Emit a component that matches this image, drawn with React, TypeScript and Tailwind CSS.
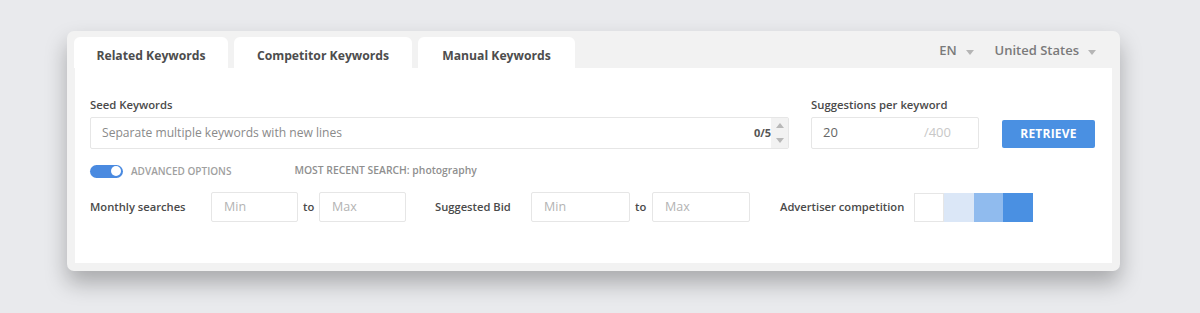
const font = { fontFamily: '"Open Sans", "Noto Sans", sans-serif' };

function Caret() {
  return (
    <svg width="8" height="5" viewBox="0 0 8 5" className="ml-[9px] mt-[2px]">
      <path d="M0 0h8L4 5z" fill="#b5b5b5" />
    </svg>
  );
}

function Tab({ label, width }: { label: string; width: string }) {
  return (
    <div
      className={`${width} h-[31px] bg-white rounded-t-[6px] flex items-center justify-center pt-[7px] text-[12.2px] font-bold text-[#4d4d4d]`}
    >
      {label}
    </div>
  );
}

function RangeInput({ w, placeholder }: { w: string; placeholder: string }) {
  return (
    <div className={`${w} h-[30px] border border-[#e6e6e6] rounded-[2px] flex items-center pl-[12px] text-[12.5px] text-[#b3b3b3]`}>
      {placeholder}
    </div>
  );
}

export default function App() {
  return (
    <div className="w-[1200px] h-[313px] bg-[#e9eaed] pt-[31px] overflow-hidden" style={font}>
      <div className="ml-[67px] w-[1053px] h-[240px] bg-[#f2f2f2] rounded-[7px] shadow-[0_12px_22px_rgba(0,0,0,0.28)] flex flex-col">
        {/* Tabs */}
        <div className="h-[37px] flex items-end pl-[7px] pr-[24px]">
          <div className="flex gap-[6px]">
            <Tab label="Related Keywords" width="w-[154px]" />
            <Tab label="Competitor Keywords" width="w-[178px]" />
            <Tab label="Manual Keywords" width="w-[157px]" />
          </div>
          <div className="ml-auto h-[31px] flex items-center text-[13px] font-semibold text-[#7a7a7a] pb-[3px]">
            <span>EN</span>
            <Caret />
            <span className="ml-[21px]">United States</span>
            <Caret />
          </div>
        </div>

        {/* Panel */}
        <div className="mx-[8px] h-[195px] bg-white pl-[15px] pt-[29px]">
          <div className="flex items-end">
            <div className="w-[699px]">
              <div className="text-[11.3px] font-semibold text-[#4a4a4a] leading-[16px] mb-[4px]">Seed Keywords</div>
              <div className="h-[32px] border border-[#e6e6e6] rounded-[2px] flex items-center">
                <span className="pl-[11px] text-[12.1px] text-[#8a8a8a] flex-1">Separate multiple keywords with new lines</span>
                <span className="text-[11px] font-bold text-[#555]">0/5</span>
                <div className="w-[17px] h-full bg-[#f2f2f2] flex flex-col items-center justify-between py-[5px]">
                  <svg width="8" height="5" viewBox="0 0 8 5"><path d="M0 5h8L4 0z" fill="#b8b8b8" /></svg>
                  <svg width="8" height="5" viewBox="0 0 8 5"><path d="M0 0h8L4 5z" fill="#b8b8b8" /></svg>
                </div>
              </div>
            </div>
            <div className="w-[168px] ml-[22px]">
              <div className="text-[11.3px] font-semibold text-[#4a4a4a] leading-[16px] mb-[4px]">Suggestions per keyword</div>
              <div className="h-[32px] border border-[#e6e6e6] rounded-[2px] flex items-center pl-[11px] pr-[27px] text-[13px]">
                <span className="text-[#666] flex-1">20</span>
                <span className="text-[#c8c8c8]">/400</span>
              </div>
            </div>
            <button className="ml-[23px] mb-[1px] w-[93px] h-[28px] bg-[#4a90e2] rounded-[2px] text-white text-[12px] font-bold tracking-[0.2px]">
              RETRIEVE
            </button>
          </div>

          <div className="flex items-center mt-[15px] h-[14px]">
            <div className="w-[33px] h-[13px] rounded-full bg-[#4a8ae0] flex items-center justify-end pr-[2px]">
              <div className="w-[10px] h-[10px] rounded-full bg-white" />
            </div>
            <span className="ml-[8px] text-[10px] text-[#a0a0a0] font-semibold">ADVANCED OPTIONS</span>
            <span className="ml-[63px] text-[10.35px] text-[#8f8f8f] font-semibold">MOST RECENT SEARCH: photography</span>
          </div>

          <div className="flex items-center mt-[14px]">
            <span className="w-[121px] text-[11.2px] font-semibold text-[#4a4a4a]">Monthly searches</span>
            <RangeInput w="w-[87px]" placeholder="Min" />
            <span className="w-[21px] pl-[5px] text-[11.2px] font-semibold text-[#4a4a4a]">to</span>
            <RangeInput w="w-[87px]" placeholder="Max" />
            <span className="ml-[29px] w-[96px] text-[11.2px] font-semibold text-[#4a4a4a]">Suggested Bid</span>
            <RangeInput w="w-[99px]" placeholder="Min" />
            <span className="w-[22px] pl-[5px] text-[11.2px] font-semibold text-[#4a4a4a]">to</span>
            <RangeInput w="w-[98px]" placeholder="Max" />
            <span className="ml-[30px] w-[134px] text-[11.2px] font-semibold text-[#4a4a4a]">Advertiser competition</span>
            <div className="flex h-[29px]">
              <div className="w-[30px] border border-[#e6e6e6] bg-white" />
              <div className="w-[30px] bg-[#dbe7f7]" />
              <div className="w-[29px] bg-[#90bbee]" />
              <div className="w-[30px] bg-[#4a90e2]" />
            </div>
          </div>
        </div>
      </div>
    </div>
  );
}
